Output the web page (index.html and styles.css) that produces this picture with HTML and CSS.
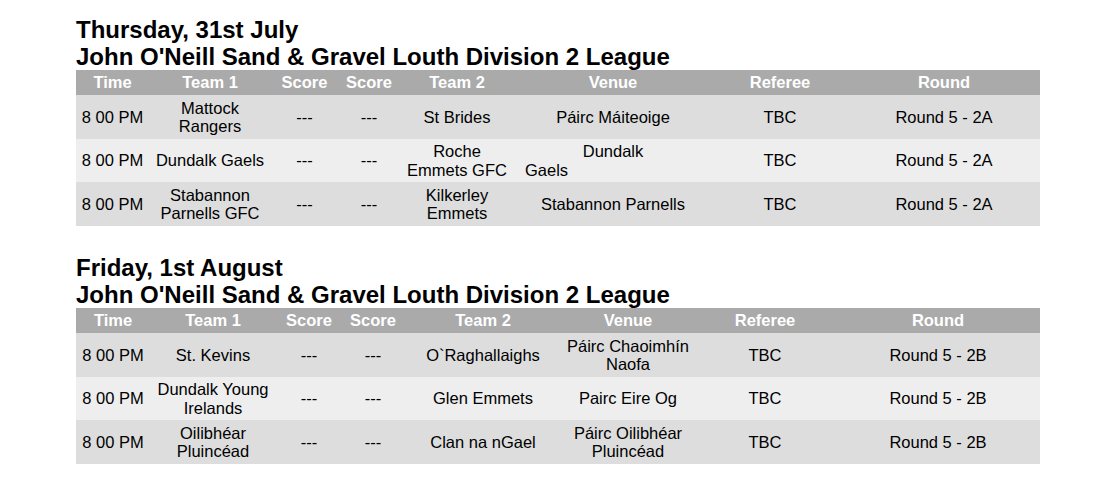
FILE: index.html
```html
<!DOCTYPE html>
<html>
<head>
<meta charset="utf-8">
<link rel="stylesheet" href="styles.css">
</head>
<body>
<div class="page">
  <section class="day day-first">
    <h2 class="date">Thursday, 31st July</h2>
    <h3 class="league">John O'Neill Sand &amp; Gravel Louth Division 2 League</h3>
    <table class="fixtures t1">
      <colgroup>
        <col class="c-time"><col class="c-team1"><col class="c-s1"><col class="c-s2"><col class="c-team2"><col class="c-venue"><col class="c-ref"><col class="c-round">
      </colgroup>
      <thead>
        <tr><th>Time</th><th>Team 1</th><th>Score</th><th>Score</th><th>Team 2</th><th>Venue</th><th>Referee</th><th>Round</th></tr>
      </thead>
      <tbody>
        <tr><td>8 00 PM</td><td>Mattock Rangers</td><td>---</td><td>---</td><td>St Brides</td><td>Páirc Máiteoige</td><td>TBC</td><td>Round 5 - 2A</td></tr>
        <tr><td>8 00 PM</td><td>Dundalk Gaels</td><td>---</td><td>---</td><td>Roche Emmets GFC</td><td><span class="vl">Dundalk</span><span class="vl vl-left">Gaels</span></td><td>TBC</td><td>Round 5 - 2A</td></tr>
        <tr><td>8 00 PM</td><td>Stabannon Parnells GFC</td><td>---</td><td>---</td><td>Kilkerley Emmets</td><td>Stabannon Parnells</td><td>TBC</td><td>Round 5 - 2A</td></tr>
      </tbody>
    </table>
  </section>
  <section class="day">
    <h2 class="date">Friday, 1st August</h2>
    <h3 class="league">John O'Neill Sand &amp; Gravel Louth Division 2 League</h3>
    <table class="fixtures t2">
      <colgroup>
        <col class="c-time"><col class="c-team1"><col class="c-s1"><col class="c-s2"><col class="c-team2"><col class="c-venue"><col class="c-ref"><col class="c-round">
      </colgroup>
      <thead>
        <tr><th>Time</th><th>Team 1</th><th>Score</th><th>Score</th><th>Team 2</th><th>Venue</th><th>Referee</th><th>Round</th></tr>
      </thead>
      <tbody>
        <tr><td>8 00 PM</td><td>St. Kevins</td><td>---</td><td>---</td><td>O`Raghallaighs</td><td>Páirc Chaoimhín Naofa</td><td>TBC</td><td>Round 5 - 2B</td></tr>
        <tr><td>8 00 PM</td><td>Dundalk Young Irelands</td><td>---</td><td>---</td><td>Glen Emmets</td><td>Pairc Eire Og</td><td>TBC</td><td>Round 5 - 2B</td></tr>
        <tr><td>8 00 PM</td><td>Oilibhéar Pluincéad</td><td>---</td><td>---</td><td>Clan na nGael</td><td>Páirc Oilibhéar Pluincéad</td><td>TBC</td><td>Round 5 - 2B</td></tr>
      </tbody>
    </table>
  </section>
</div>
</body>
</html>
```

FILE: styles.css
```css
html, body {
  margin: 0;
  padding: 0;
  background: #ffffff;
}

body {
  font-family: "Liberation Sans", Arial, sans-serif;
  color: #000000;
}

.page {
  padding: 16px 0 0 76px;
  width: 964px;
}

.day {
  margin-top: 28px;
}

.day-first {
  margin-top: 0;
}

.date,
.league {
  margin: 0;
  font-size: 24px;
  line-height: 27px;
  font-weight: bold;
}

.fixtures {
  width: 964px;
  table-layout: fixed;
  border-collapse: collapse;
  border-spacing: 0;
  font-size: 16.5px;
  line-height: 18.4px;
}

.fixtures th,
.fixtures td {
  padding: 3.4px 3px;
  text-align: center;
  vertical-align: middle;
}

.fixtures th {
  background: #aaaaaa;
  color: #ffffff;
  font-weight: bold;
}

.fixtures tbody tr:nth-child(odd) td {
  background: #dddddd;
}

.fixtures tbody tr:nth-child(even) td {
  background: #eeeeee;
}

.vl {
  display: block;
}

.vl-left {
  text-align: left;
  padding-left: 8px;
}

/* table 1 column widths */
.t1 .c-time { width: 73px; }
.t1 .c-team1 { width: 122px; }
.t1 .c-s1 { width: 67px; }
.t1 .c-s2 { width: 62px; }
.t1 .c-team2 { width: 114px; }
.t1 .c-venue { width: 198px; }
.t1 .c-ref { width: 136px; }
.t1 .c-round { width: 192px; }

/* table 2 column widths */
.t2 .c-time { width: 74px; }
.t2 .c-team1 { width: 126px; }
.t2 .c-s1 { width: 66px; }
.t2 .c-s2 { width: 62px; }
.t2 .c-team2 { width: 158px; }
.t2 .c-venue { width: 132px; }
.t2 .c-ref { width: 142px; }
.t2 .c-round { width: 204px; }
```
